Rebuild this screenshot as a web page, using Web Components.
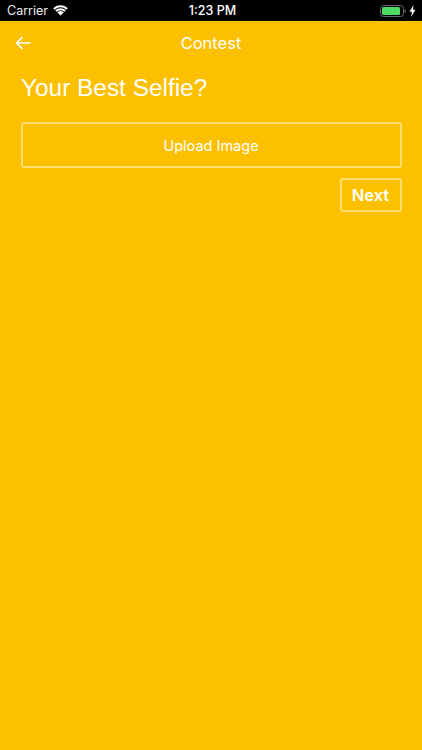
<!DOCTYPE html>
<html><head><meta charset="utf-8"><style>
html,body{margin:0;padding:0;background:#fdc000;height:100%;overflow:hidden}
body{font-family:Inter,"Liberation Sans",sans-serif}
</style></head><body>
<app-screen>
  <status-bar></status-bar>
  <nav-bar>Contest</nav-bar>
  <contest-question>Your Best Selfie?</contest-question>
  <outline-button kind="wide">Upload Image</outline-button>
  <next-row><outline-button kind="next">Next</outline-button></next-row>
</app-screen>
<script>
function def(name,html){customElements.define(name,class extends HTMLElement{constructor(){super();this.attachShadow({mode:'open'}).innerHTML=html;}});}
def('app-screen',`<style>:host{display:flex;flex-direction:column;width:422px;height:750px;background:#fdc000;color:#fff;overflow:hidden}</style><slot></slot>`);
def('status-bar',`<style>:host{display:flex;align-items:center;height:21px;background:#000;color:#fff;box-sizing:border-box;padding:0 6px 0 7px;font:12.5px/21px "Inter","Liberation Sans",sans-serif;position:relative}
.l{display:flex;align-items:center;gap:5px;flex:1}.l span{color:#eee}.c{position:absolute;left:3px;right:0;text-align:center;font-weight:500}
.r{display:flex;align-items:center;gap:3px}svg{display:block}</style>
<div class="l"><span>Carrier</span><svg width="15" height="11" viewBox="0 0 15 11"><path d="M1 4a9 9 0 0 1 13 0M3 6.2a6 6 0 0 1 9 0M5 8.2a3.2 3.2 0 0 1 5 0" fill="none" stroke="#fff" stroke-width="2"/><path d="M5.6 8.6a2.6 2.6 0 0 1 3.8 0L7.5 10.8z" fill="#fff"/></svg></div>
<div class="c">1:23 PM</div>
<div class="r"><svg width="26" height="12" viewBox="0 0 26 12"><rect x=".5" y=".5" width="23" height="11" rx="3" fill="none" stroke="#666" /><rect x="2" y="2" width="18" height="8" rx="1.5" fill="#4cd964"/><path d="M24.6 4.2c.9.2 1.2 1 1.2 1.8s-.3 1.6-1.2 1.8z" fill="#777"/></svg><svg width="7" height="12" viewBox="0 0 7 12"><path d="M4.4 0L.5 6.8h2.4L2.2 12l4.2-7.2H4z" fill="#fff"/></svg></div>`);
def('nav-bar',`<style>:host{display:flex;align-items:center;justify-content:center;height:45px;font:400 16.5px "Inter","Liberation Sans",sans-serif;position:relative;color:#fff;box-sizing:border-box;padding-bottom:2px}svg{position:absolute;left:15px;top:14px}</style>
<svg width="16" height="16" viewBox="0 0 16 16"><path d="M15.5 8H1.5M7.5 2L1.5 8l6 6" fill="none" stroke="#fff" stroke-width="1.7"/></svg><slot></slot>`);
def('contest-question',`<style>:host{display:block;padding:7px 21px 0;font:400 24.4px/30px "Liberation Sans",sans-serif;color:#fff}</style><slot></slot>`);
customElements.define('outline-button',class extends HTMLElement{constructor(){super();this.attachShadow({mode:'open'}).innerHTML=`<style>
:host{display:flex;align-items:center;justify-content:center;box-sizing:border-box;border:2px solid #ffdf6b;border-radius:3px;color:#fff;font-family:"Inter","Liberation Sans",sans-serif}
:host([kind=wide]){height:46px;margin:19px 20.5px 0;font-size:14.5px}
:host([kind=next]){width:62px;height:34px;font-size:16.5px;font-weight:600}</style><slot></slot>`;}});
def('next-row',`<style>:host{display:flex;justify-content:flex-end;padding:10px 20.5px 0}</style><slot></slot>`);
</script></body></html>
